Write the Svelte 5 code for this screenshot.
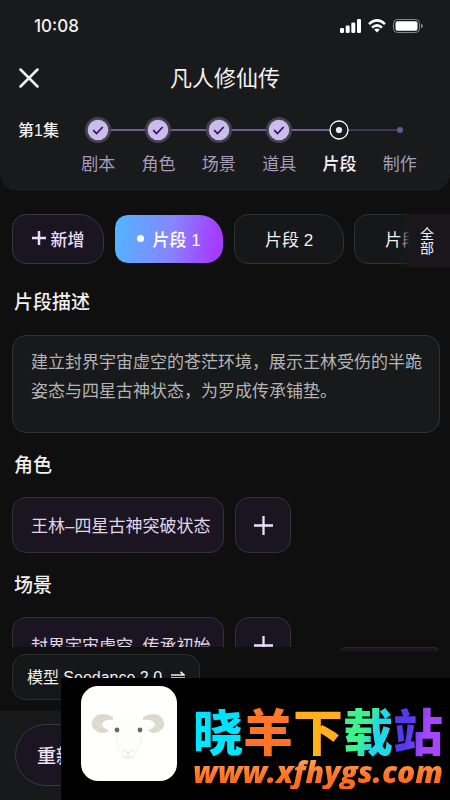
<script>
  const steps = [
    { name: '剧本', state: 'done' },
    { name: '角色', state: 'done' },
    { name: '场景', state: 'done' },
    { name: '道具', state: 'done' },
    { name: '片段', state: 'current' },
    { name: '制作', state: 'todo' }
  ];
  const clips = ['片段 1', '片段 2', '片段 3'];
  let active = $state(0);
  let description = $state('建立封界宇宙虚空的苍茫环境，展示王林受伤的半跪姿态与四星古神状态，为罗成传承铺垫。');
  const groups = [
    { title: '角色', item: '王林–四星古神突破状态' },
    { title: '场景', item: '封界宇宙虚空–传承初始' }
  ];
</script>

<div class="app">
  <header>
    <div class="status">
      <span class="time">10:08</span>
      <div class="signals">
        <svg width="21" height="14" viewBox="0 0 21 14" fill="#fff" aria-hidden="true">
          <rect x="0" y="9" width="4" height="5" rx="1.3" /><rect x="5.7" y="6.5" width="4" height="7.5" rx="1.3" />
          <rect x="11.3" y="3.5" width="4" height="10.5" rx="1.3" /><rect x="17" y="0" width="4" height="14" rx="1.3" />
        </svg>
        <svg width="18" height="14" viewBox="0 0 18 14" fill="none" stroke="#fff" stroke-width="2.5" aria-hidden="true">
          <path d="M1 5.1Q9-2.3 17 5.1M4 8.6Q9 4.1 14 8.6" />
          <path d="M6.2 10.6Q9 8.4 11.8 10.6L9 13.6Z" fill="#fff" stroke="none" />
        </svg>
        <svg width="30" height="14" viewBox="0 0 30 14" aria-hidden="true">
          <rect x=".5" y=".5" width="26" height="13" rx="4" fill="none" stroke="#858687" />
          <rect x="2.5" y="2.3" width="22" height="9.4" rx="2" fill="#fff" />
          <path d="M28 4.8q2 1 2 2.2t-2 2.2z" fill="#858687" />
        </svg>
      </div>
    </div>
    <div class="titlebar">
      <button class="close" aria-label="关闭">
        <svg width="20" height="20" viewBox="0 0 20 20" fill="none" stroke="#f4f4f4" stroke-width="2.5" stroke-linecap="round"><path d="M1.5 1.5l17 17M18.5 1.5l-17 17" /></svg>
      </button>
      <h1>凡人修仙传</h1>
    </div>
    <div class="progress">
      <span class="episode">第1集</span>
      <ol>
        {#each steps as step}
          <li class={step.state}>
            <span class="mark">
              {#if step.state === 'done'}
                <svg width="26" height="26" viewBox="0 0 26 26" fill="none">
                  <circle cx="13" cy="13" r="13" fill="#45424f" /><circle cx="13" cy="13" r="10.3" fill="#cbbcec" />
                  <path d="M8.2 13.2l3.3 3.3 6.2-6.5" stroke="#34125f" stroke-width="1.7" />
                </svg>
              {:else if step.state === 'current'}
                <svg width="20" height="20" viewBox="0 0 20 20">
                  <circle cx="10" cy="10" r="9" fill="#191a1c" stroke="#fff" stroke-width="1.3" /><circle cx="10" cy="10" r="3.1" fill="#f0eaff" />
                </svg>
              {:else}
                <i></i>
              {/if}
            </span>
            <span class="name">{step.name}</span>
          </li>
        {/each}
      </ol>
    </div>
  </header>

  <main>
    <div class="clips">
      <div class="track">
        <button class="chip add">
          <svg width="14" height="14" viewBox="0 0 14 14" stroke="#eadcff" stroke-width="2.5"><path d="M7 0v14M0 7h14" /></svg>新增
        </button>
        {#each clips as clip, i}
          <button class="chip clip" class:active={active === i} onclick={() => (active = i)}>
            {#if active === i}<i></i>{/if}{clip}
          </button>
        {/each}
      </div>
      <button class="all"><span>全部</span></button>
    </div>

    <h2><label for="description">片段描述</label></h2>
    <textarea id="description" spellcheck="false" bind:value={description}></textarea>

    {#each groups as group}
      <h2>{group.title}</h2>
      <div class="assets">
        <button class="asset">{group.item}</button>
        <button class="asset plus" aria-label="添加{group.title}">
          <svg width="19" height="19" viewBox="0 0 19 19" stroke="#eadff8" stroke-width="2.3"><path d="M9.5 0v19M0 9.5h19" /></svg>
        </button>
      </div>
    {/each}
  </main>

  <div class="dock">
    <button class="model">
      模型 Seedance 2.0
      <svg width="14" height="10" viewBox="0 0 14 10" fill="none" stroke="#eee" stroke-width="1.7"><path d="M0 4h13L9.5.8M14 7H1l3.5 3" /></svg>
    </button>
    <div class="edge"></div>
  </div>

  <footer><button class="redo">重新生成</button></footer>

  <aside>
    <svg class="logo" width="98" height="98" viewBox="0 0 98 98" aria-hidden="true">
      <rect x="1" y="1" width="96" height="95" rx="17" fill="#fffffe" />
      <path d="M29 44Q33 35 41 34Q49 32 57 34Q66 36 69 44L63 55Q61 66 55 71Q48 76 41 70Q36 65 35 55Z" fill="#fdfdfc" />
      <path d="M33 32Q25 27 18 30C8 35 11 47 23 48Q27 48 29 45Q22 43 22 39Q24 34 33 35Z" fill="#dcd8ce" />
      <path d="M63 32Q71 27 78 30C88 35 85 47 74 48Q70 48 68 45Q75 43 75 39Q73 34 63 35Z" fill="#dcd8ce" />
      <path d="M13 36l8 4M15 45l8-5M83 36l-8 4M81 45l-7-5" stroke="#e8e5dd" stroke-width="1" />
      <path d="M36 49Q37 63 42 69Q48 76 55 69Q60 63 62 49" fill="none" stroke="#f5f4f2" stroke-width="1" />
      <path d="M43 65l5 3 5-3M48 68v4M43 72q5 3 10 0" fill="none" stroke="#e6e2df" stroke-width="1" />
      <circle cx="37" cy="45" r="2.4" fill="#686966" /><circle cx="60" cy="45" r="2.4" fill="#686966" />
    </svg>
    <div class="brand">
      <strong><span class="c1">晓</span><span class="c2">羊</span><span class="c3">下</span><span class="c4">载</span><span class="c5">站</span></strong>
      <a href="http://www.xfhygs.com">www.xfhygs.com</a>
    </div>
  </aside>
</div>

<style>
  :global(body) { background: #0f0f0f; }
  .app {
    position: relative; display: flex; flex-direction: column; height: 100vh; overflow: hidden;
    background: #0f0f0f; color: #f1f1f1;
    font-family: "Liberation Sans", "Noto Sans CJK SC", sans-serif; font-size: 17px;
  }
  .app * { box-sizing: border-box; }
  button { margin: 0; padding: 0; font: inherit; color: inherit; background: none; border: 0; white-space: nowrap; }
  svg { display: block; flex: none; }
  header { flex: none; height: 191px; background: #191a1c; border-radius: 0 0 18px 18px; }
  .status { display: flex; justify-content: space-between; align-items: center; height: 52px; padding: 0 27px 0 34px; }
  .time { font-family: Inter, sans-serif; font-size: 17px; font-weight: 500; }
  .signals { display: flex; align-items: center; gap: 7px; }
  .titlebar { display: grid; grid-template-columns: 40px 1fr 40px; align-items: center; height: 52px; padding: 0 9px; }
  .close { display: flex; justify-content: center; align-items: center; height: 40px; }
  h1 { margin: 0; padding-top: 2px; text-align: center; font-size: 22px; line-height: 32px; font-weight: 400; }
  .progress { display: flex; padding: 13px 20px 0 18px; }
  .episode { flex: none; width: 50px; font-size: 16px; line-height: 28px; font-weight: 500; }
  ol { flex: 1; display: grid; grid-template-columns: repeat(6, 1fr); margin: 0; padding: 0; list-style: none; }
  li { position: relative; display: flex; flex-direction: column; align-items: center; gap: 10px; color: #a69dbb; }
  li:not(:last-child)::after { content: ""; position: absolute; left: 50%; top: 12px; width: 100%; height: 2px; background: #6c5d94; }
  li.current::after { background: #40375c; }
  .mark { position: relative; z-index: 1; display: flex; justify-content: center; align-items: center; height: 26px; }
  .mark i { width: 6px; height: 6px; border-radius: 50%; background: #695896; }
  .name { line-height: 24px; }
  .current .name { color: #f5f0ff; font-weight: 500; }
  main { flex: 1; min-height: 0; overflow: hidden; padding: 23px 10px 0 12px; }
  .clips { position: relative; margin-right: -10px; }
  .track { display: flex; gap: 10px; overflow: hidden; }
  .chip {
    flex: none; display: flex; justify-content: center; align-items: center; height: 50px; padding-bottom: 2px;
    border: 1px solid #303233; border-radius: 14px 25px 18px 14px; background: #151718;
  }
  .add { width: 92px; gap: 5px; background: #1a1520; border-color: #3a353e; color: #eadcff; font-weight: 500; }
  .clip { width: 110px; }
  .active { gap: 8px; border: 1px solid #0f0f0f; background: linear-gradient(100deg, #4db7ff, #8785ff 52%, #a43eff 90%); color: #fff; font-weight: 500; }
  .active i { width: 7px; height: 7px; border-radius: 50%; background: #fff; }
  .all {
    position: absolute; right: 0; top: 0; width: 52px; height: 53px; padding-left: 6px;
    display: flex; justify-content: center; align-items: center;
    background: linear-gradient(90deg, transparent, #19171c 12px);
  }
  .all span { width: 14px; white-space: normal; font-size: 14px; line-height: 14px; }
  h2 { margin: 25px 0 18px 2px; font-size: 19px; line-height: 28px; font-weight: 500; }
  textarea {
    display: block; width: 100%; height: 98px; margin: 0; padding: 12px 16px 12px 18px; resize: none; overflow: hidden;
    border: 1px solid #303132; border-radius: 14px; background: #17191a; color: #b4b4b4;
    font: inherit; line-height: 29px; outline: 0;
  }
  textarea ~ h2 { margin: 19px 0 17px 2px; }
  .assets { display: flex; gap: 11px; }
  .asset { height: 56px; padding: 0 13px 2px 18px; border: 1px solid #343038; border-radius: 14px; background: #1a1520; color: #e1d7e9; }
  .plus { display: flex; justify-content: center; align-items: center; width: 56px; padding: 0; }
  .dock { flex: none; display: flex; justify-content: space-between; height: 64px; padding: 0 12px; background: #0f0f0f; }
  .model {
    display: flex; justify-content: center; align-items: center; gap: 9px; width: 188px; height: 46px; margin-top: 7px; padding-bottom: 2px;
    border: 1px solid #2b2d2e; border-radius: 14px; background: #151718; font-size: 16px;
  }
  .edge { width: 97px; height: 4px; border: 1px solid #29252d; border-bottom: 0; border-radius: 4px 4px 0 0; background: #1a1520; }
  footer { flex: none; height: 89px; padding: 13px 15px; background: #17191a; }
  .redo { width: 200px; height: 62px; padding: 0 0 2px 21px; text-align: left; border: 1px solid #3d3743; border-radius: 31px; background: #1a1520; color: #eee4f4; font-size: 19px; font-weight: 500; }
  aside { position: absolute; right: 0; bottom: 0; display: flex; align-items: flex-start; gap: 15px; width: calc(100% - 61px); height: 122px; padding: 7px 0 0 19px; background: #000; }
  .brand { display: flex; flex-direction: column; padding-top: 18px; }
  strong { font-family: "Noto Sans CJK SC", sans-serif; font-size: 50px; line-height: 52px; font-weight: 900; white-space: nowrap; }
  strong span { background-clip: text; -webkit-background-clip: text; color: transparent; }
  .c1 { background-image: linear-gradient(#00ddff, #00eaff); }
  .c2 { background-image: linear-gradient(#ff7c2e, #ff6d24); }
  .c3 { background-image: linear-gradient(#ffac24, #ffb414); }
  .c4 { background-image: linear-gradient(110deg, #3bf38f 45%, #20d8e8 62%); }
  .c5 { background-image: linear-gradient(100deg, #5638ed 35%, #a647ff 65%); }
  a {
    font-family: "Open Sans", sans-serif; font-size: 30px; line-height: 34px; font-weight: 800; font-style: italic; text-decoration: none;
    background: linear-gradient(#ffac67, #ff7424 60%, #ff671c); background-clip: text; -webkit-background-clip: text; color: transparent;
  }
</style>
